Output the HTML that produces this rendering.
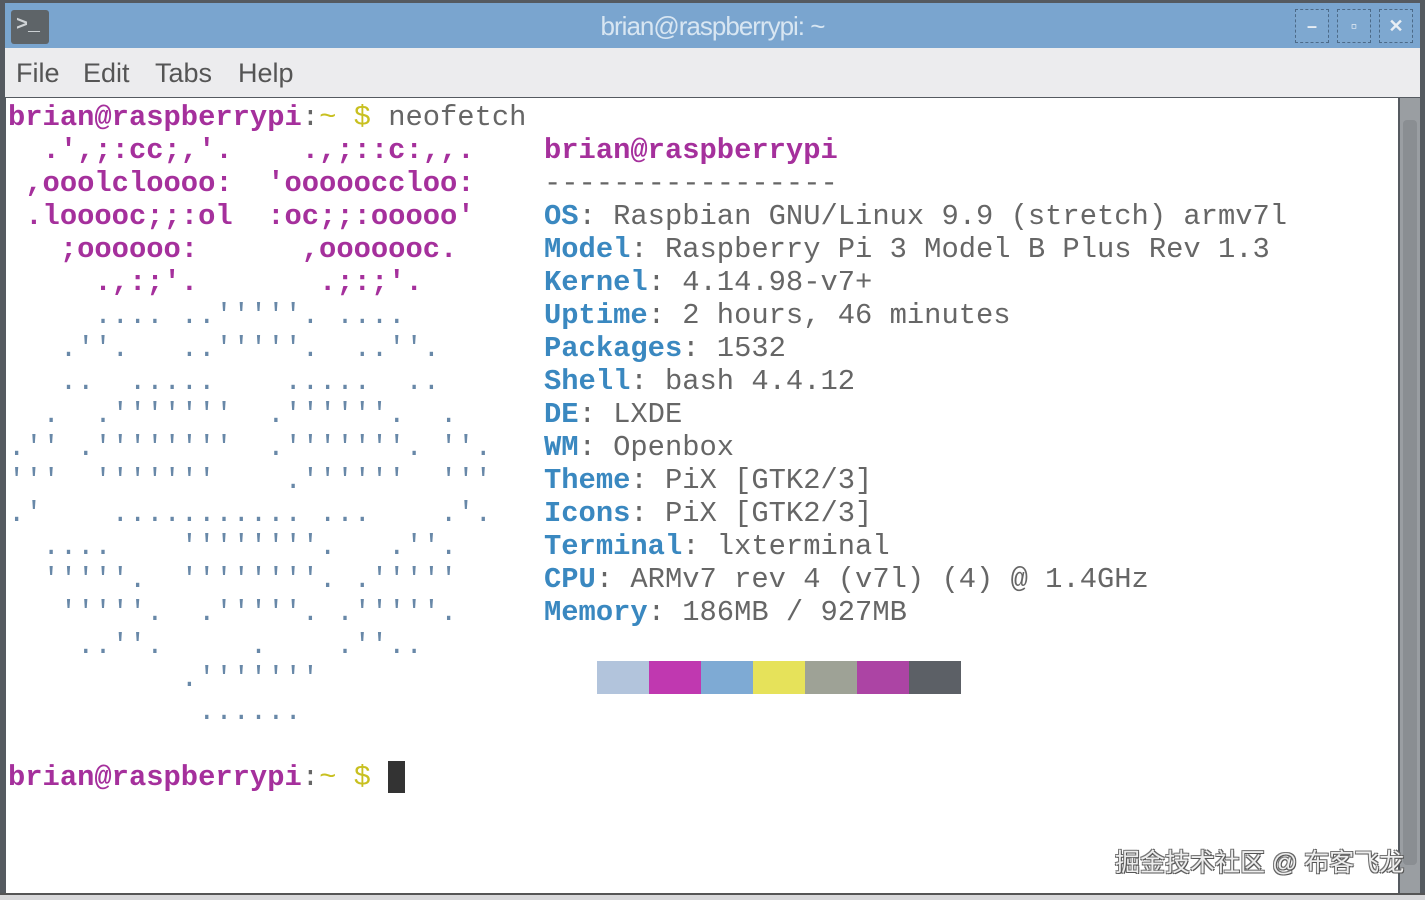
<!DOCTYPE html>
<html><head><meta charset="utf-8"><style>
*{margin:0;padding:0;box-sizing:border-box}
body{width:1425px;height:900px;overflow:hidden;background:#555a60;position:relative;font-family:"Liberation Sans",sans-serif}
#title{position:absolute;left:5px;top:3px;width:1415px;height:45px;background:#7aa5cf}
#title .t{position:absolute;left:0;right:0;top:8px;text-align:center;color:#d8e6f2;font-size:26px;letter-spacing:-1px}
#icon{position:absolute;left:6px;top:7px;width:38px;height:34px;background:#5e6468;border-radius:3px;color:#cfd3d6;font:bold 20px "Liberation Mono",monospace;padding:4px 0 0 5px}
.btn{position:absolute;top:6px;width:34px;height:34px;border:1px dashed #4c6a88;background:#7ea8d0;color:#e8eef4;text-align:center;font:bold 18px "Liberation Sans",sans-serif;line-height:32px}
#menu{position:absolute;left:5px;top:48px;width:1415px;height:49px;background:#ececee;color:#555;font-size:27px}
#menu span{position:absolute;top:10px}
#term{position:absolute;left:6px;top:98px;width:1392px;height:795px;background:#fff}
#sb{position:absolute;left:1400px;top:98px;width:20px;height:795px;background:#9a9ea2}
#sb .th{position:absolute;left:3px;top:22px;width:14px;height:745px;background:#8a8e92;border-radius:4px}
#bot{position:absolute;left:0;top:893px;width:1425px;height:7px;background:#d8d8da;border-top:2px solid #555}
pre{position:absolute;font-family:"Liberation Mono",monospace;font-size:28.8px;line-height:33px;white-space:pre}
.m{color:#a5309c;font-weight:bold}
.g{color:#666}
.c{color:#3a88c0;font-weight:bold}
.d{color:#6888a8}
.y{color:#c8c020}
#bar{position:absolute;left:597px;top:661px;height:33px;display:flex}
#bar div{width:52px;height:33px}
#wm{position:absolute;left:1115px;top:843px;font-family:"Liberation Sans","Noto Sans CJK SC",sans-serif;font-size:25px;color:#eee;text-shadow:1px 1px 0 #555,-1px -1px 0 #777,1px -1px 0 #666,-1px 1px 0 #666}
#cur{position:absolute;left:388px;top:761px;width:17px;height:32px;background:#333}
</style></head><body>
<div id="title"><div id="icon">&gt;_</div><div class="t">brian@raspberrypi: ~</div>
<div class="btn" style="left:1290px">–</div><div class="btn" style="left:1332px">▫</div><div class="btn" style="left:1374px">✕</div></div>
<div id="menu"><span style="left:11px">File</span><span style="left:78px">Edit</span><span style="left:150px">Tabs</span><span style="left:233px">Help</span></div>
<div id="term"></div>
<div id="sb"><div class="th"></div></div>
<div id="bot"></div>
<pre style="left:8px;top:101px"><span class="m">brian@raspberrypi</span><span class="g">:</span><span class="y">~ $</span> <span class="g">neofetch</span>
<span class="m">  .',;:cc;,'.    .,;::c:,,.</span>
<span class="m"> ,ooolcloooo:  'oooooccloo:</span>
<span class="m"> .looooc;;:ol  :oc;;:ooooo'</span>
<span class="m">   ;oooooo:      ,ooooooc.</span>
<span class="m">     .,:;'.       .;:;'.</span>
<span class="d">     .... ..'''''. ....</span>
<span class="d">   .''.   ..'''''.  ..''.</span>
<span class="d">   ..  .....    .....  ..</span>
<span class="d">  .  .'''''''  .''''''.  .</span>
<span class="d">.'' .''''''''  .'''''''. ''.</span>
<span class="d">'''  '''''''    .''''''  '''</span>
<span class="d">.'    ........... ...    .'.</span>
<span class="d">  ....    ''''''''.   .''.</span>
<span class="d">  '''''.  ''''''''. .'''''</span>
<span class="d">   '''''.  .'''''. .'''''.</span>
<span class="d">    ..''.     .    .''..</span>
<span class="d">          .'''''''</span>
<span class="d">           ......</span>

<span class="m">brian@raspberrypi</span><span class="g">:</span><span class="y">~ $</span></pre>
<pre style="left:544px;top:134px"><span class="m">brian@raspberrypi</span>
<span class="g">-----------------</span>
<span class="c">OS</span><span class="g">: Raspbian GNU/Linux 9.9 (stretch) armv7l</span>
<span class="c">Model</span><span class="g">: Raspberry Pi 3 Model B Plus Rev 1.3</span>
<span class="c">Kernel</span><span class="g">: 4.14.98-v7+</span>
<span class="c">Uptime</span><span class="g">: 2 hours, 46 minutes</span>
<span class="c">Packages</span><span class="g">: 1532</span>
<span class="c">Shell</span><span class="g">: bash 4.4.12</span>
<span class="c">DE</span><span class="g">: LXDE</span>
<span class="c">WM</span><span class="g">: Openbox</span>
<span class="c">Theme</span><span class="g">: PiX [GTK2/3]</span>
<span class="c">Icons</span><span class="g">: PiX [GTK2/3]</span>
<span class="c">Terminal</span><span class="g">: lxterminal</span>
<span class="c">CPU</span><span class="g">: ARMv7 rev 4 (v7l) (4) @ 1.4GHz</span>
<span class="c">Memory</span><span class="g">: 186MB / 927MB</span></pre>
<div id="bar"><div style="background:#b2c4dc"></div><div style="background:#c038b0"></div><div style="background:#7eaad4"></div><div style="background:#e6e25a"></div><div style="background:#9ea296"></div><div style="background:#ac44a4"></div><div style="background:#5c6066"></div></div>
<div id="cur"></div>
<div id="wm">掘金技术社区 @ 布客飞龙</div>
</body></html>
